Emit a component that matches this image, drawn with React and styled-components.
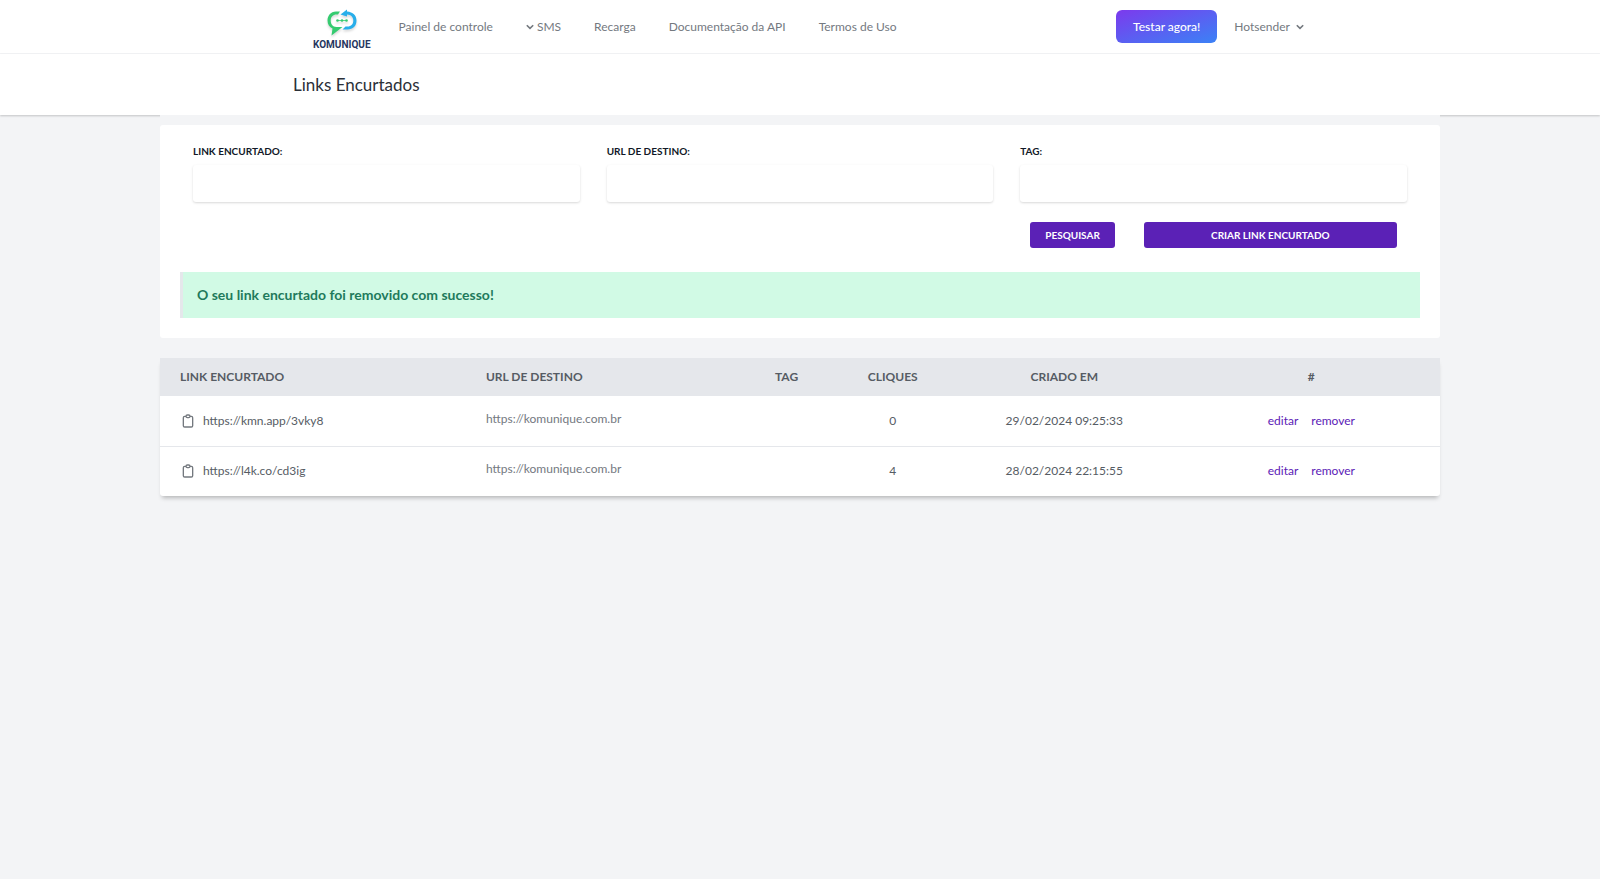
import React, { useState } from 'react';
import styled, { createGlobalStyle, ThemeProvider } from 'styled-components';

const theme = {
    colors: {
        page: '#f3f4f6',
        white: '#ffffff',
        line: '#e5e7eb',
        text: '#74797f',
        textDark: '#565c64',
        title: '#2b3038',
        primary: '#5b21b6',
        success: '#1f7a5c',
        successLight: '#d1fae5',
    },
};

const GlobalStyle = createGlobalStyle`
    *, *::before, *::after {
        box-sizing: border-box;
    }

    body {
        margin: 0;
        background: #f3f4f6;
        font-family: Lato, sans-serif;
        font-size: 12px;
        line-height: 16px;
        color: #111827;
    }

    button, input {
        font: inherit;
    }
`;

const NavBar = styled.nav`
    background: ${(props) => props.theme.colors.white};
    border-bottom: 1px solid ${(props) => props.theme.colors.page};
`;

const Container = styled.div`
    display: flex;
    align-items: center;
    max-width: 1066px;
    margin: 0 auto;
    padding: 0 26px;
`;

const NavContent = styled(Container)`
    height: 53px;
    padding-right: 29px;
`;

const Logo = styled.a`
    display: flex;
    flex-direction: column;
    align-items: center;
    margin: 0 28px 0 20px;
    padding-top: 7px;
    color: #27375f;
    font-family: Roboto, sans-serif;
    font-size: 10px;
    font-weight: 700;
    line-height: 14px;
    text-decoration: none;
`;

const LogoMark = styled.svg`
    width: 34px;
    height: 29px;
    filter: drop-shadow(0 2px 1px rgba(0, 0, 0, 0.15));
`;

const NavLinks = styled.div`
    display: flex;
    align-items: center;
    gap: 33px;
    flex: 1;
`;

const NavLink = styled.a`
    color: ${(props) => props.theme.colors.text};
    text-decoration: none;
`;

const NavMenu = styled.button`
    display: flex;
    align-items: center;
    gap: ${(props) => props.$gap}px;
    border: 0;
    padding: 0;
    background: none;
    color: ${(props) => props.theme.colors.text};
    cursor: pointer;
`;

const NavActions = styled.div`
    display: flex;
    align-items: center;
    gap: 17px;
`;

const TryButton = styled.button`
    height: 33px;
    padding: 0 17px;
    border: 0;
    border-radius: 6px;
    background: linear-gradient(to bottom right, #7c3aed, #3b82f6);
    color: ${(props) => props.theme.colors.white};
    font-weight: 500;
    cursor: pointer;
`;

const Header = styled.header`
    background: ${(props) => props.theme.colors.white};
    box-shadow: 0 1px 2px rgba(0, 0, 0, 0.2);
`;

const Title = styled.h1`
    margin: 0;
    padding: 20px 0;
    color: ${(props) => props.theme.colors.title};
    font-size: 17px;
    font-weight: 400;
    line-height: 21px;
`;

const Main = styled.main`
    position: relative;
    max-width: 1280px;
    margin: 0 auto;
    padding: 10px 0 20px;
    background: ${(props) => props.theme.colors.page};
`;

const Card = styled.section`
    padding: 20px;
    border-radius: 3px;
    background: ${(props) => props.theme.colors.white};
`;

const Filters = styled.form`
    display: grid;
    grid-template-columns: repeat(3, 1fr);
    column-gap: 27px;
    row-gap: 20px;
    padding: 0 13px;
`;

const Field = styled.label`
    display: flex;
    flex-direction: column;
    gap: 7px;
    font-size: 10px;
    font-weight: 700;
    line-height: 13px;
    text-transform: uppercase;
`;

const Input = styled.input`
    width: 100%;
    height: 37px;
    padding: 0 10px;
    border: 0;
    border-radius: 3px;
    background: ${(props) => props.theme.colors.white};
    box-shadow: 0 1px 3px rgba(0, 0, 0, 0.1), 0 1px 2px rgba(0, 0, 0, 0.06);
    font-size: 12px;
`;

const Buttons = styled.div`
    display: grid;
    grid-template-columns: 1fr 3fr;
    column-gap: 29px;
    grid-column: 3;
    padding: 0 10px;
`;

const Button = styled.button`
    height: 26px;
    padding: 0 12px;
    border: 0;
    border-radius: 3px;
    background: ${(props) => props.theme.colors.primary};
    color: ${(props) => props.theme.colors.white};
    font-size: 10px;
    font-weight: 700;
    text-transform: uppercase;
    cursor: pointer;
`;

const Alert = styled.div`
    margin-top: 24px;
    padding: 15px 14px;
    border-left: 3px solid ${(props) => props.theme.colors.line};
    background: ${(props) => props.theme.colors.successLight};
    color: ${(props) => props.theme.colors.success};
    font-size: 14px;
    font-weight: 700;
`;

const TableWrapper = styled.div`
    margin-top: 20px;
    border-radius: 0 0 3px 3px;
    background: ${(props) => props.theme.colors.white};
    box-shadow: 0 4px 4px -2px rgba(0, 0, 0, 0.25);
`;

const Table = styled.table`
    width: 100%;
    border-collapse: collapse;
    table-layout: fixed;
`;

const HeadCell = styled.th`
    width: ${(props) => props.$width};
    height: 38px;
    padding: 0 20px;
    background: ${(props) => props.theme.colors.line};
    color: ${(props) => props.theme.colors.textDark};
    font-weight: 700;
    text-align: ${(props) => props.$align || 'center'};
    text-transform: uppercase;
`;

const Row = styled.tr`
    & + & {
        border-top: 1px solid ${(props) => props.theme.colors.line};
    }
`;

const Cell = styled.td`
    height: 50px;
    padding: 0 20px;
    color: ${(props) => props.theme.colors.textDark};
    text-align: ${(props) => props.$align || 'center'};
`;

const UrlCell = styled(Cell)`
    padding-bottom: 4px;
    color: ${(props) => props.theme.colors.text};
`;

const ShortLink = styled.div`
    display: flex;
    align-items: center;
    gap: 7px;
`;

const CopyButton = styled.button`
    display: flex;
    padding: 0;
    border: 0;
    background: none;
    color: ${(props) => props.theme.colors.text};
    cursor: pointer;
`;

const Actions = styled.div`
    display: flex;
    justify-content: center;
    gap: 13px;
`;

const ActionLink = styled.a`
    color: ${(props) => props.theme.colors.primary};
    text-decoration: none;
`;

const Chevron = () => (
    <svg width="8" height="6" viewBox="0 0 8 6" fill="none" stroke="currentColor" strokeWidth="1.6" aria-hidden="true">
        <path d="M0.8 1.2L4 4.4L7.2 1.2" />
    </svg>
);

const Clipboard = () => (
    <svg
        width="16"
        height="16"
        viewBox="0 0 24 24"
        fill="none"
        stroke="currentColor"
        strokeWidth="2"
        strokeLinecap="round"
        strokeLinejoin="round"
        aria-hidden="true"
    >
        <path d="M9 5H7a2 2 0 00-2 2v12a2 2 0 002 2h10a2 2 0 002-2V7a2 2 0 00-2-2h-2M9 5a2 2 0 002 2h2a2 2 0 002-2M9 5a2 2 0 012-2h2a2 2 0 012 2" />
    </svg>
);

const columns = [
    { label: 'Link encurtado', width: '23.9%', align: 'left' },
    { label: 'URL de destino', width: '20.9%', align: 'left' },
    { label: 'Tag', width: '8.3%' },
    { label: 'Cliques', width: '8.3%' },
    { label: 'Criado em', width: '18.5%' },
    { label: '#', width: '20.1%' },
];

const links = [
    { short: 'https://kmn.app/3vky8', url: 'https://komunique.com.br', tag: '', clicks: 0, date: '29/02/2024 09:25:33' },
    { short: 'https://l4k.co/cd3ig', url: 'https://komunique.com.br', tag: '', clicks: 4, date: '28/02/2024 22:15:55' },
];

const App = () => {
    const [filters, setFilters] = useState({ link: '', url: '', tag: '' });
    const handleChange = (e) => setFilters({ ...filters, [e.target.name]: e.target.value });

    return (
        <ThemeProvider theme={theme}>
            <GlobalStyle />
            <NavBar>
                <NavContent>
                    <Logo href="#">
                        <LogoMark viewBox="0 0 34 29" aria-hidden="true">
                            <path d="M15 2.500H11C5.500 2.500 2.500 7 2.500 11.500C2.500 15.500 4.500 18 7.500 19.500L6.500 26.500L17.500 18H11.500C7.500 18 5.700 15 5.700 11.500C5.700 8 8 5.500 11.500 5.500H13Z" fill="#35cb70" />
                            <path d="M15.500 5.500L22 0.500V2.500C28 3 31.500 6.500 31.500 11.500C31.500 17 28 20.500 22.500 20.500H17.500L20.500 17.500H22.500C26.300 17.500 28.300 15 28.300 11.500C28.300 8 26 5.800 22 5.500V7.500Z" fill="#28aeea" />
                            <path d="M12.500 11.500H21.500" stroke="#35cb70" strokeWidth="0.8" />
                            <circle cx="12.500" cy="11.500" r="1.300" fill="#35cb70" />
                            <circle cx="17" cy="11.500" r="1.300" fill="#35cb70" />
                            <circle cx="21.500" cy="11.500" r="1.300" fill="#35cb70" />
                        </LogoMark>
                        KOMUNIQUE
                    </Logo>
                    <NavLinks>
                        <NavLink href="#">Painel de controle</NavLink>
                        <NavMenu type="button" $gap={3}>
                            <Chevron />
                            SMS
                        </NavMenu>
                        <NavLink href="#">Recarga</NavLink>
                        <NavLink href="#">Documentação da API</NavLink>
                        <NavLink href="#">Termos de Uso</NavLink>
                    </NavLinks>
                    <NavActions>
                        <TryButton type="button">Testar agora!</TryButton>
                        <NavMenu type="button" $gap={6}>
                            Hotsender
                            <Chevron />
                        </NavMenu>
                    </NavActions>
                </NavContent>
            </NavBar>
            <Header>
                <Container>
                    <Title>Links Encurtados</Title>
                </Container>
            </Header>
            <Main>
                <Card>
                    <Filters onSubmit={(e) => e.preventDefault()}>
                        <Field>
                            Link encurtado:
                            <Input name="link" value={filters.link} onChange={handleChange} />
                        </Field>
                        <Field>
                            URL de destino:
                            <Input name="url" value={filters.url} onChange={handleChange} />
                        </Field>
                        <Field>
                            Tag:
                            <Input name="tag" value={filters.tag} onChange={handleChange} />
                        </Field>
                        <Buttons>
                            <Button type="submit">Pesquisar</Button>
                            <Button type="button">Criar link encurtado</Button>
                        </Buttons>
                    </Filters>
                    <Alert role="alert">O seu link encurtado foi removido com sucesso!</Alert>
                </Card>
                <TableWrapper>
                    <Table>
                        <thead>
                            <tr>
                                {columns.map((column) => (
                                    <HeadCell key={column.label} $width={column.width} $align={column.align}>
                                        {column.label}
                                    </HeadCell>
                                ))}
                            </tr>
                        </thead>
                        <tbody>
                            {links.map((link) => (
                                <Row key={link.short}>
                                    <Cell $align="left">
                                        <ShortLink>
                                            <CopyButton type="button" aria-label="Copiar">
                                                <Clipboard />
                                            </CopyButton>
                                            {link.short}
                                        </ShortLink>
                                    </Cell>
                                    <UrlCell $align="left">{link.url}</UrlCell>
                                    <Cell>{link.tag}</Cell>
                                    <Cell>{link.clicks}</Cell>
                                    <Cell>{link.date}</Cell>
                                    <Cell>
                                        <Actions>
                                            <ActionLink href="#">editar</ActionLink>
                                            <ActionLink href="#">remover</ActionLink>
                                        </Actions>
                                    </Cell>
                                </Row>
                            ))}
                        </tbody>
                    </Table>
                </TableWrapper>
            </Main>
        </ThemeProvider>
    );
};

export default App;
